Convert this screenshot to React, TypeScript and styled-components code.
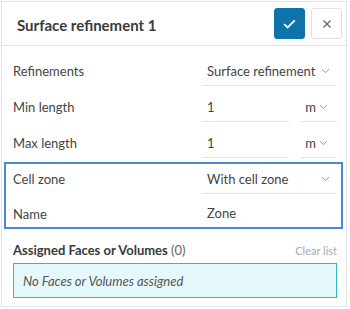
import React from "react";
import styled, { createGlobalStyle } from "styled-components";

const GlobalStyle = createGlobalStyle`
  html, body {
    margin: 0;
    padding: 0;
    background: #ffffff;
    font-family: Lato, "Open Sans", sans-serif;
    color: #333;
  }
`;

const Panel = styled.div`
  box-sizing: border-box;
  width: 346px;
  height: 306px;
  margin: 1px 0 0 1px;
  border: 1px solid #e4e4e4;
  background: #fff;
  display: flex;
  flex-direction: column;
`;

const Header = styled.div`
  height: 43px;
  display: flex;
  align-items: center;
  padding: 0 4px 0 15px;
  border-bottom: 1px solid #e2e2e2;
  gap: 6px;
`;

const Title = styled.div`
  flex: 1;
  font-size: 15px;
  font-weight: 700;
  color: #3b3b3b;
  padding-top: 2px;
`;

const IconButton = styled.button<{ $primary?: boolean }>`
  box-sizing: border-box;
  width: 31px;
  height: 31px;
  padding: 0;
  border-radius: 3px;
  display: flex;
  align-items: center;
  justify-content: center;
  border: 1px solid ${(p) => (p.$primary ? "#0f72a8" : "#e0e0e0")};
  background: ${(p) => (p.$primary ? "#0f72a8" : "#fff")};
  color: ${(p) => (p.$primary ? "#fff" : "#666")};
`;

const Body = styled.div`
  padding: 4px 9px 0 11px;
  display: flex;
  flex-direction: column;
`;

const Row = styled.div<{ $height?: number; $shift?: number }>`
  height: ${(p) => p.$height ?? 36}px;
  display: grid;
  grid-template-columns: 189px 1fr;
  align-items: stretch;
  font-size: 13px;
  color: #444;
  & > div {
    padding-top: ${(p) => p.$shift ?? 6}px;
  }
`;

const Label = styled.div`
  box-sizing: border-box;
  display: flex;
  align-items: center;
`;

const Fields = styled.div`
  display: flex;
  gap: 12px;
`;

const Field = styled.div<{ $underline?: boolean; $width?: string }>`
  box-sizing: border-box;
  flex: ${(p) => (p.$width ? `0 0 ${p.$width}` : "1")};
  display: flex;
  align-items: center;
  justify-content: space-between;
  gap: 3px;
  padding: ${(p) => (p.$width ? "0 9px 0 4px" : "0 7px 0 5px")};
  border-bottom: 1px solid ${(p) => (p.$underline ? "#e3e3e3" : "transparent")};
  font-size: 13px;
  color: #444;
`;

const Highlight = styled.div`
  margin: 4px -6px 0 -9px;
  padding: 0 4px 0 7px;
  border: 2px solid #4c88d9;
`;

const Assigned = styled.div`
  display: flex;
  align-items: center;
  justify-content: space-between;
  height: 26px;
  margin-top: 8px;
`;

const AssignedTitle = styled.div`
  font-size: 13px;
  font-weight: 700;
  color: #3a3a3a;
  span {
    font-weight: 400;
    color: #666;
  }
`;

const ClearLink = styled.div`
  font-size: 11px;
  color: #aaa;
`;

const EmptyBox = styled.div`
  box-sizing: border-box;
  height: 35px;
  border: 1px solid #30b7c9;
  background: #e5f8fc;
  display: flex;
  align-items: center;
  padding-left: 9px;
  font-style: italic;
  font-size: 13px;
  color: #555;
`;

const Chevron = () => (
  <svg width="9" height="6" viewBox="0 0 9 6" fill="none">
    <path d="M1 1.2 L4.5 4.6 L8 1.2" stroke="#999" strokeWidth="1" />
  </svg>
);

export default function App() {
  return (
    <>
      <GlobalStyle />
      <Panel>
        <Header>
          <Title>Surface refinement 1</Title>
          <IconButton $primary>
            <svg width="13" height="10" viewBox="0 0 13 10" fill="none">
              <path d="M1.2 5.2 L4.6 8.4 L11.8 1.4" stroke="#fff" strokeWidth="1.8" />
            </svg>
          </IconButton>
          <IconButton>
            <svg width="10" height="10" viewBox="0 0 10 10" fill="none">
              <path d="M1.5 1.5 L8.5 8.5 M8.5 1.5 L1.5 8.5" stroke="#666" strokeWidth="1.3" />
            </svg>
          </IconButton>
        </Header>
        <Body>
          <Row>
            <Label>Refinements</Label>
            <Fields>
              <Field $underline>
                Surface refinement <Chevron />
              </Field>
            </Fields>
          </Row>
          <Row>
            <Label>Min length</Label>
            <Fields>
              <Field $underline>1</Field>
              <Field $underline $width="32px">
                m <Chevron />
              </Field>
            </Fields>
          </Row>
          <Row>
            <Label>Max length</Label>
            <Fields>
              <Field $underline>1</Field>
              <Field $underline $width="32px">
                m <Chevron />
              </Field>
            </Fields>
          </Row>
          <Highlight>
            <Row $height={30} $shift={0}>
              <Label>Cell zone</Label>
              <Fields>
                <Field $underline>
                  With cell zone <Chevron />
                </Field>
              </Fields>
            </Row>
            <Row $height={33} $shift={6}>
              <Label>Name</Label>
              <Fields>
                <Field>Zone</Field>
              </Fields>
            </Row>
          </Highlight>
          <Assigned>
            <AssignedTitle>
              Assigned Faces or Volumes <span>(0)</span>
            </AssignedTitle>
            <ClearLink>Clear list</ClearLink>
          </Assigned>
          <EmptyBox>No Faces or Volumes assigned</EmptyBox>
        </Body>
      </Panel>
    </>
  );
}
